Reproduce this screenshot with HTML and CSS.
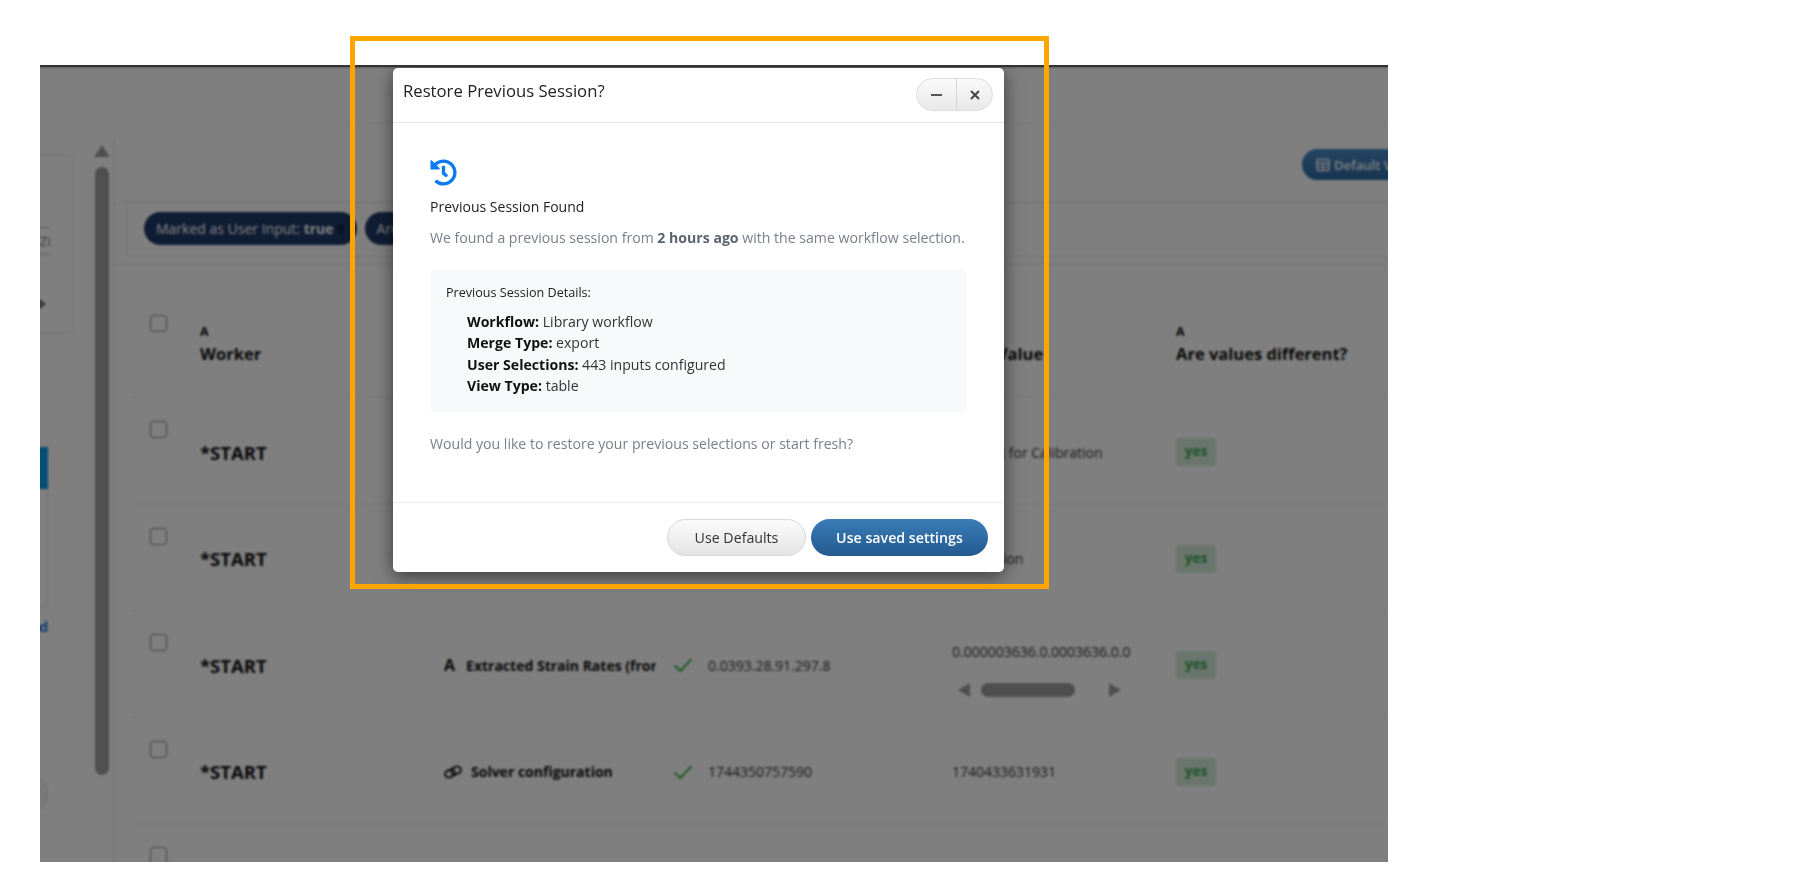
FILE: index.html
```html
<!DOCTYPE html>
<html lang="en">
<head>
    <meta charset="UTF-8">
    <title>Restore Previous Session</title>
    <link rel="stylesheet" href="styles.css">
</head>
<body>
    <div class="app">
        <div class="topbar"></div>
        <div class="workspace">
            <aside class="sidebar">
                <div class="side-card">
                    <div class="side-field">Zi</div>
                    <div class="side-arrow"></div>
                </div>
                <div class="side-action"></div>
                <div class="side-box"></div>
                <div class="side-link">d</div>
                <div class="side-circle"></div>
            </aside>

            <div class="scroll-col">
                <div class="arrow-up"></div>
                <div class="scroll-thumb"></div>
            </div>

            <main class="main">
                <div class="toolbar">
                    <button class="view-pill">
                        <svg width="14" height="14" viewBox="0 0 14 14" fill="none" stroke="currentColor" stroke-width="1.4"><rect x="1" y="1.5" width="12" height="11" rx="1"/><path d="M1 5.2h12M1 8.9h12M7 5.2v7.3"/></svg>
                        Default View
                    </button>
                </div>
                <div class="filter-box">
                    <span class="chip">Marked as User Input:&nbsp;<b>true</b><i class="chip-x"></i></span>
                    <span class="chip">Are</span>
                </div>

                <div class="table">
                    <div class="row head">
                        <div class="check-cell"><span class="checkbox"></span></div>
                        <div class="head-cell"><small>A</small>Worker</div>
                        <div></div>
                        <div></div>
                        <div class="head-cell"><small></small>Prior Value</div>
                        <div class="head-cell"><small>A</small>Are values different?</div>
                    </div>
                    <div class="row">
                        <div class="check-cell"><span class="checkbox"></span></div>
                        <div class="worker">*START</div>
                        <div class="input-name"></div>
                        <div class="value"></div>
                        <div class="prev">Request for Calibration</div>
                        <div><span class="yes">yes</span></div>
                    </div>
                    <div class="row">
                        <div class="check-cell"><span class="checkbox"></span></div>
                        <div class="worker">*START</div>
                        <div class="input-name"></div>
                        <div class="value"></div>
                        <div class="prev">Calibration</div>
                        <div><span class="yes">yes</span></div>
                    </div>
                    <div class="row">
                        <div class="check-cell"><span class="checkbox"></span></div>
                        <div class="worker">*START</div>
                        <div class="input-name"><span class="type-a">A</span><span class="name-text">Extracted Strain Rates (from</span></div>
                        <div class="value">
                            <svg class="tick" width="20" height="16" viewBox="0 0 20 16" fill="none"><path d="M1.5 8.5l6 5.5L18.5 2" stroke="currentColor" stroke-width="2"/></svg>
                            0.0393.28.91.297.8
                        </div>
                        <div class="prev prev-scroll">
                            <div>0.000003636.0.0003636.0.0</div>
                            <div class="hscroll">
                                <span class="arrow-left"></span>
                                <span class="hthumb"></span>
                                <span class="arrow-right"></span>
                            </div>
                        </div>
                        <div><span class="yes">yes</span></div>
                    </div>
                    <div class="row">
                        <div class="check-cell"><span class="checkbox"></span></div>
                        <div class="worker">*START</div>
                        <div class="input-name">
                            <svg class="type-link" width="18" height="14" viewBox="0 0 18 14" fill="none" stroke="currentColor" stroke-width="1.8"><rect x="1" y="5" width="10" height="7" rx="3.5" transform="rotate(-22 6 8.5)"/><rect x="7" y="2" width="10" height="7" rx="3.5" transform="rotate(-22 12 5.5)"/></svg>
                            <span class="name-text">Solver configuration</span>
                        </div>
                        <div class="value">
                            <svg class="tick" width="20" height="16" viewBox="0 0 20 16" fill="none"><path d="M1.5 8.5l6 5.5L18.5 2" stroke="currentColor" stroke-width="2"/></svg>
                            1744350757590
                        </div>
                        <div class="prev">1740433631931</div>
                        <div><span class="yes">yes</span></div>
                    </div>
                    <div class="row">
                        <div class="check-cell"><span class="checkbox"></span></div>
                    </div>
                </div>
            </main>
        </div>

        <div class="overlay"></div>

        <div class="modal">
            <div class="modal-header">
                <h1>Restore Previous Session?</h1>
                <div class="win-btns">
                    <button class="win-btn">
                        <svg width="13" height="12" viewBox="0 0 13 12"><path d="M1 6h11" stroke="#555" stroke-width="2"/></svg>
                    </button>
                    <button class="win-btn">
                        <svg width="12" height="12" viewBox="0 0 12 12"><path d="M2 2l8 8M10 2l-8 8" stroke="#444" stroke-width="2"/></svg>
                    </button>
                </div>
            </div>
            <div class="modal-body">
                <svg class="history-icon" width="27" height="27" viewBox="0 0 512 512"><path fill="currentColor" d="M504 255.531c.253 136.64-111.18 248.372-247.82 248.468-59.015.042-113.223-20.53-155.822-54.911-11.077-8.94-11.905-25.541-1.839-35.607l11.267-11.267c8.609-8.609 22.353-9.551 31.891-1.984C173.062 425.135 212.781 440 256 440c101.705 0 184-82.311 184-184 0-101.705-82.311-184-184-184-48.814 0-93.149 18.969-126.068 49.932l50.754 50.754c10.08 10.08 2.941 27.314-11.313 27.314H24c-8.837 0-16-7.163-16-16V38.627c0-14.254 17.234-21.393 27.314-11.314l49.372 49.372C129.209 34.136 189.552 8 256 8c136.81 0 247.747 110.78 248 247.531zm-180.912 78.784l9.823-12.63c8.138-10.463 6.253-25.542-4.21-33.679L288 256.349V152c0-13.255-10.745-24-24-24h-16c-13.255 0-24 10.745-24 24v135.651l65.409 50.874c10.463 8.137 25.541 6.253 33.679-4.21z"/></svg>
                <h2>Previous Session Found</h2>
                <p class="muted">We found a previous session from <strong>2 hours ago</strong> with the same workflow selection.</p>
                <div class="details">
                    <div class="details-title">Previous Session Details:</div>
                    <ul>
                        <li><strong>Workflow:</strong> Library workflow</li>
                        <li><strong>Merge Type:</strong> export</li>
                        <li><strong>User Selections:</strong> 443 inputs configured</li>
                        <li><strong>View Type:</strong> table</li>
                    </ul>
                </div>
                <p class="muted question">Would you like to restore your previous selections or start fresh?</p>
            </div>
            <div class="modal-footer">
                <button class="btn btn-default">Use Defaults</button>
                <button class="btn btn-primary">Use saved settings</button>
            </div>
        </div>
    </div>

    <div class="frame"></div>
</body>
</html>
```

FILE: styles.css
```css
* {
    box-sizing: border-box;
}
body {
    margin: 0;
    background: white;
    font-family: 'Open Sans', 'Noto Sans', sans-serif;
    color: #212529;
    height: 887px;
    overflow: hidden;
    position: relative;
}
button {
    font-family: inherit;
}

/* page behind the dialog */
.app {
    position: relative;
    margin: 65px 0 0 40px;
    width: 1348px;
    height: 797px;
    background: white;
    border-top: 2px solid #333;
    overflow: hidden;
}
.topbar {
    height: 56px;
    border-bottom: 1px solid #ececec;
}
.workspace {
    display: flex;
    height: 740px;
}
.sidebar {
    width: 55px;
    flex-shrink: 0;
    padding-top: 31px;
    overflow: hidden;
}
.side-card {
    width: 34px;
    height: 180px;
    border: 1px solid #e6e6e6;
    border-left: none;
    border-radius: 0 8px 8px 0;
    padding-top: 72px;
}
.side-field {
    width: 10px;
    height: 28px;
    border-top: 1px solid #bbb;
    border-bottom: 1px solid #bbb;
    font-size: 13px;
    line-height: 26px;
    color: #777;
    overflow: hidden;
}
.side-arrow {
    width: 0;
    height: 0;
    margin-top: 44px;
    border-left: 6px solid #777;
    border-top: 5px solid transparent;
    border-bottom: 5px solid transparent;
}
.side-action {
    width: 8px;
    height: 42px;
    margin-top: 113px;
    background: #0a9de8;
}
.side-box {
    width: 8px;
    height: 118px;
    border-right: 1px solid #e6e6e6;
    border-bottom: 1px solid #e6e6e6;
}
.side-link {
    width: 8px;
    margin-top: 10px;
    font-size: 14px;
    font-weight: 700;
    line-height: 20px;
    color: #2a7de1;
    direction: rtl;
    overflow: hidden;
}
.side-circle {
    width: 40px;
    height: 40px;
    margin: 137px 0 0 -32px;
    border-radius: 50%;
    background: #f3f3f3;
    border: 1px solid #ddd;
}
.scroll-col {
    width: 20px;
    flex-shrink: 0;
    padding-top: 22px;
    border-right: 1px solid #e6e6e6;
    margin-top: 15px;
}
.arrow-up {
    width: 0;
    height: 0;
    margin-left: -1px;
    border-left: 8px solid transparent;
    border-right: 8px solid transparent;
    border-bottom: 12px solid #9e9e9e;
    margin-top: -15px;
}
.scroll-thumb {
    width: 14px;
    height: 608px;
    margin: 10px 0 0 0;
    background: #9e9e9e;
    border-radius: 7px;
}
.main {
    flex: 1;
    min-width: 0;
}
.toolbar {
    height: 80px;
    border-bottom: 1px solid #e0e0e0;
    padding: 26px 0 0 1187px;
}
.view-pill {
    display: flex;
    align-items: center;
    gap: 4px;
    width: 130px;
    height: 31px;
    padding: 0 14px;
    border: none;
    border-radius: 16px;
    background: linear-gradient(#4a8ac4, #2e6aa3);
    color: white;
    font-size: 13px;
    font-weight: 600;
    white-space: nowrap;
}
.filter-box {
    display: flex;
    gap: 8px;
    width: 1400px;
    height: 54px;
    margin-left: 11px;
    padding: 9px 17px;
    border-left: 1px solid #e0e0e0;
    border-bottom: 1px solid #e0e0e0;
    border-radius: 0 0 0 4px;
}
.chip {
    display: inline-flex;
    align-items: center;
    height: 33px;
    padding: 0 12px;
    border-radius: 17px;
    background: #1f3a68;
    color: white;
    font-size: 14px;
    white-space: nowrap;
}
.chip-x {
    width: 8px;
    height: 12px;
    margin-left: 3px;
    border-radius: 50%;
    background: #152744;
}
.table {
    margin-top: 7px;
    border-top: 1px solid #e8e8e8;
}
.row {
    display: grid;
    grid-template-columns: 69px 244px 229px 279px 224px 1fr;
    align-items: center;
    height: 106.5px;
    margin-left: 16px;
    padding-top: 3px;
    border-bottom: 1px solid #ececec;
}
.row.head {
    height: 133px;
    padding-top: 26px;
}
.check-cell {
    align-self: start;
    padding: 20px 0 0 19px;
}
.head .check-cell {
    padding-top: 24px;
}
.checkbox {
    display: block;
    width: 17px;
    height: 17px;
    border: 1px solid #888;
    border-radius: 3px;
    background: white;
}
.head-cell {
    font-size: 16.5px;
    font-weight: 700;
    line-height: 22px;
    color: #111;
    white-space: nowrap;
}
.head-cell small {
    display: block;
    height: 20px;
    font-size: 12.5px;
    line-height: 17px;
}
.worker {
    font-size: 18.5px;
    font-weight: 700;
    color: #111;
}
.input-name {
    display: flex;
    align-items: center;
    gap: 9px;
    width: 212px;
    overflow: hidden;
    white-space: nowrap;
    color: #111;
}
.type-a {
    margin-right: 2px;
    font-size: 16px;
    font-weight: 700;
}
.type-link {
    flex-shrink: 0;
}
.name-text {
    font-size: 14px;
    font-weight: 700;
}
.value {
    display: flex;
    align-items: center;
    gap: 15px;
    font-size: 14px;
    color: #3a3a3a;
}
.tick {
    color: #3fb950;
}
.prev {
    font-size: 14px;
    color: #3a3a3a;
    white-space: nowrap;
}
.prev-scroll {
    padding-top: 13px;
}
.hscroll {
    display: flex;
    align-items: center;
    width: 176px;
    height: 24px;
    margin-top: 17px;
    padding-left: 6px;
}
.arrow-left {
    border-right: 12px solid #9e9e9e;
    border-top: 7px solid transparent;
    border-bottom: 7px solid transparent;
}
.hthumb {
    width: 94px;
    height: 14px;
    margin: 0 34px 0 11px;
    border-radius: 7px;
    background: #9e9e9e;
}
.arrow-right {
    border-left: 12px solid #9e9e9e;
    border-top: 7px solid transparent;
    border-bottom: 7px solid transparent;
}
.yes {
    display: inline-block;
    width: 40px;
    height: 28px;
    border-radius: 3px;
    background: #d4edda;
    color: #34a853;
    font-size: 13.5px;
    font-weight: 700;
    line-height: 26px;
    text-align: center;
}
.overlay {
    position: absolute;
    inset: 0;
    background: rgba(0, 0, 0, 0.5);
    backdrop-filter: blur(1px);
}

/* dialog */
.modal {
    position: absolute;
    left: 353px;
    top: 1px;
    display: flex;
    flex-direction: column;
    width: 611px;
    height: 504px;
    background: white;
    border-radius: 5px;
    box-shadow: 0 4px 18px rgba(0, 0, 0, 0.55);
}
.modal-header {
    display: flex;
    align-items: flex-start;
    justify-content: space-between;
    height: 55px;
    padding: 10px 11px 0 10px;
    border-bottom: 1px solid #e6e6e6;
}
.modal-header h1 {
    margin: 0;
    font-size: 16.7px;
    font-weight: 400;
    line-height: 26px;
    color: #222;
}
.win-btns {
    display: flex;
    width: 77px;
    height: 33px;
    border: 1px solid #dcdcdc;
    border-radius: 17px;
    background: linear-gradient(#fafafa, #e8e8e8);
    overflow: hidden;
}
.win-btn {
    display: flex;
    align-items: center;
    justify-content: center;
    flex: 1;
    padding: 0;
    border: none;
    background: none;
}
.win-btn + .win-btn {
    flex: 0 0 36px;
    border-left: 1px solid #d4d4d4;
}
.modal-body {
    flex: 1;
    padding: 36px 37px 0;
}
.history-icon {
    display: block;
    color: #0d7bf2;
}
.modal-body h2 {
    margin: 11px 0 0;
    font-size: 14px;
    font-weight: 400;
    line-height: 20px;
    color: #222;
}
.muted {
    margin: 11px 0 0;
    font-size: 14.1px;
    line-height: 20px;
    color: #78808a;
}
.muted strong {
    color: #5a6570;
}
.details {
    height: 143px;
    margin-top: 21px;
    padding: 15px 16px 0;
    border-radius: 6px;
    background: #f8f9fa;
}
.details-title {
    font-size: 12.6px;
    line-height: 18px;
    color: #222;
}
.details ul {
    list-style: none;
    margin: 9px 0 0;
    padding: 0 0 0 21px;
}
.details li {
    font-size: 14.1px;
    line-height: 21.3px;
    color: #333;
}
.details strong {
    color: #111;
}
.question {
    margin-top: 22px;
}
.modal-footer {
    display: flex;
    justify-content: flex-end;
    gap: 5px;
    height: 70px;
    padding: 16px 16px 0 0;
    border-top: 1px solid #ececec;
}
.btn {
    height: 37px;
    border-radius: 19px;
    font-size: 14.2px;
    white-space: nowrap;
}
.btn-default {
    width: 139px;
    border: 1px solid #d8d8d8;
    background: linear-gradient(#fbfbfb, #e4e4e4);
    color: #333;
}
.btn-primary {
    width: 177px;
    border: none;
    background: linear-gradient(#3a7cb8, #235a8e);
    color: white;
    font-weight: 600;
}

/* highlight frame */
.frame {
    position: absolute;
    left: 350px;
    top: 36px;
    width: 699px;
    height: 553px;
    border: 5px solid #ffa500;
    pointer-events: none;
}
```
